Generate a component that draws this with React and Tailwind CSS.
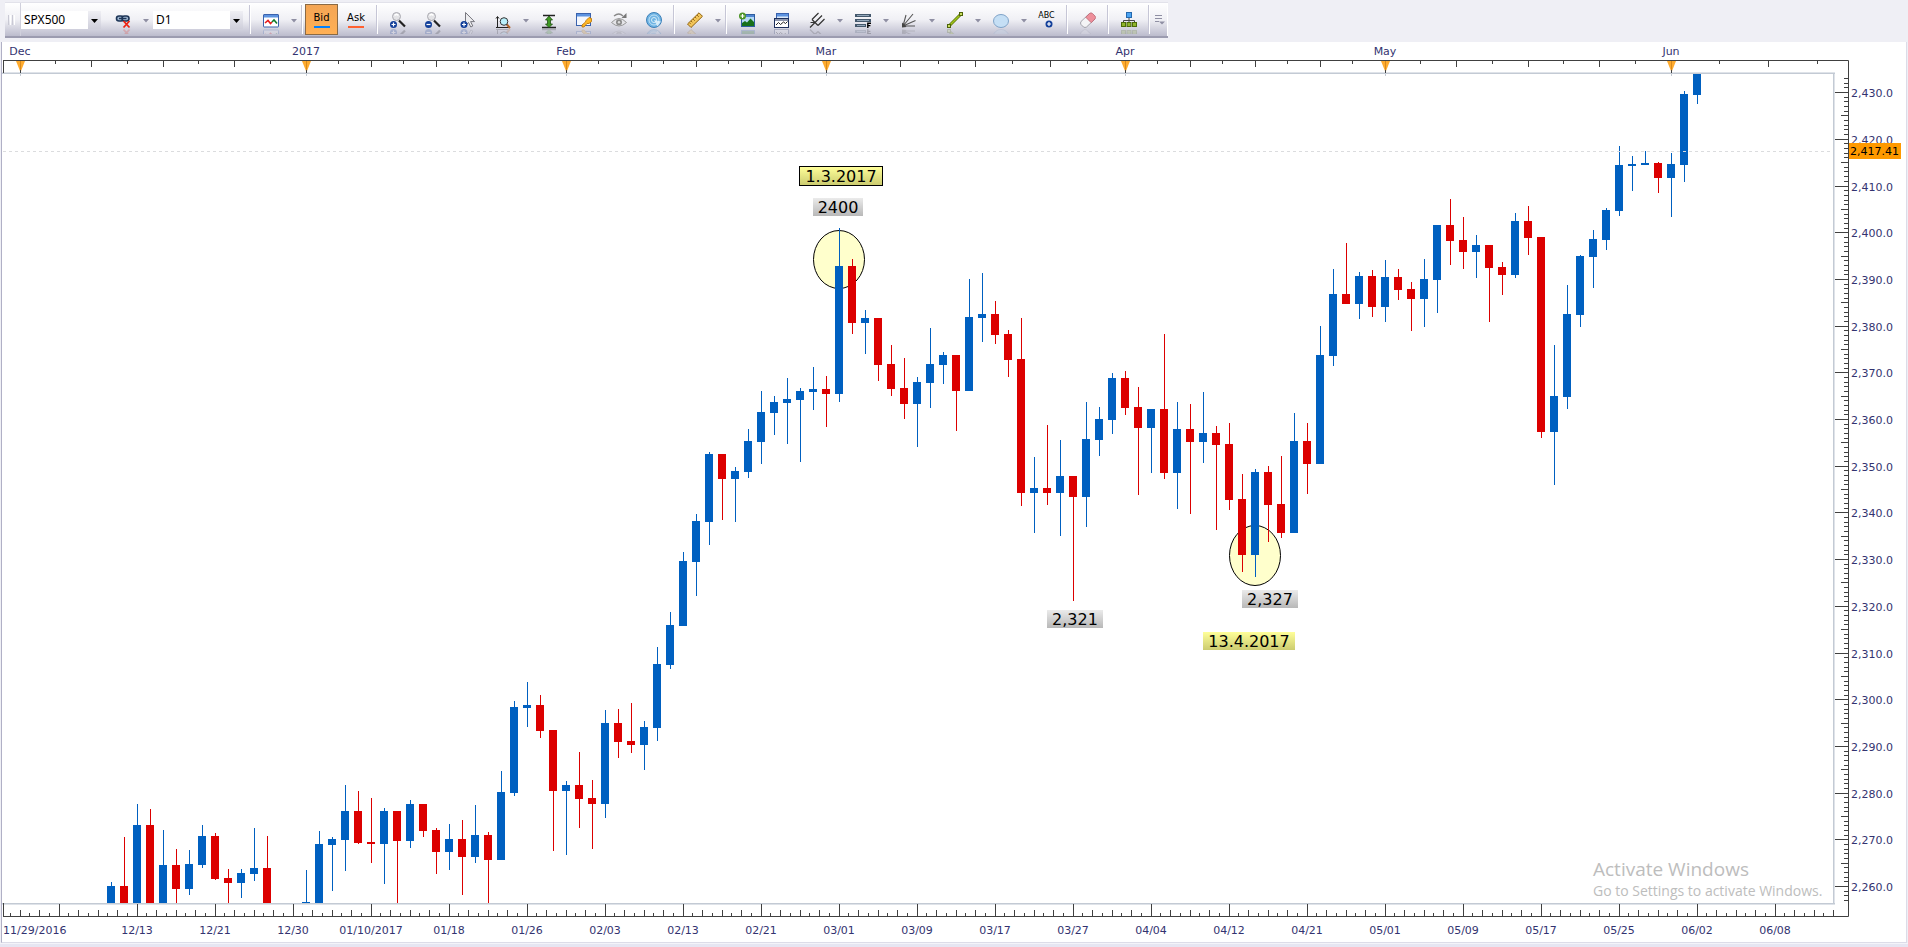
import React from "react";

const UP = "#0060c0";
const DOWN = "#dc0000";
const INK = "#404040";
const LABEL = "#333370";
const FRAME = "#c3cad4";
const FRAME_LIGHT = "#dfe3e9";

// slot, direction, body top, body bottom, wick top, wick bottom
const CANDLES = [
  [0, 1, 886, 903, 882, 903], [1, 0, 886, 903, 837, 903], [2, 1, 825, 903, 804, 903],
  [3, 0, 825, 903, 809, 903], [4, 1, 865, 903, 830, 903], [5, 0, 865, 889, 849, 903],
  [6, 1, 864, 889, 850, 895], [7, 1, 836, 865, 825, 868], [8, 0, 836, 879, 833, 880],
  [9, 0, 878, 883, 869, 903], [10, 1, 873, 883, 869, 898], [11, 1, 868, 874, 828, 881],
  [12, 0, 868, 903, 836, 903], [15, 1, 902, 903, 870, 903], [16, 1, 844, 903, 831, 903],
  [17, 1, 839, 845, 837, 891], [18, 1, 811, 840, 785, 871], [19, 0, 811, 843, 791, 844],
  [20, 0, 842, 844, 798, 863], [21, 1, 811, 844, 808, 884], [22, 0, 811, 841, 811, 903],
  [23, 1, 804, 841, 800, 848], [24, 0, 804, 831, 804, 837], [25, 0, 830, 852, 828, 874],
  [26, 1, 839, 852, 824, 870], [27, 0, 839, 857, 820, 895], [28, 1, 835, 857, 805, 863],
  [29, 0, 835, 860, 832, 903], [30, 1, 792, 860, 771, 860], [31, 1, 707, 793, 701, 796],
  [32, 1, 705, 708, 682, 727], [33, 0, 705, 731, 695, 738], [34, 0, 730, 791, 730, 851],
  [35, 1, 785, 791, 781, 855], [36, 0, 785, 799, 752, 828], [37, 0, 798, 804, 780, 849],
  [38, 1, 723, 804, 710, 818], [39, 0, 723, 742, 709, 758], [40, 0, 741, 745, 703, 753],
  [41, 1, 727, 745, 721, 770], [42, 1, 664, 728, 647, 741], [43, 1, 625, 665, 612, 669],
  [44, 1, 561, 626, 552, 626], [45, 1, 521, 562, 514, 596], [46, 1, 454, 522, 452, 545],
  [47, 0, 454, 479, 454, 520], [48, 1, 471, 479, 467, 522], [49, 1, 441, 472, 429, 478],
  [50, 1, 412, 442, 391, 464], [51, 1, 402, 413, 396, 435], [52, 1, 399, 403, 378, 444],
  [53, 1, 391, 400, 388, 462], [54, 1, 389, 392, 367, 410], [55, 0, 389, 394, 376, 427],
  [56, 1, 266, 394, 228, 402], [57, 0, 266, 323, 259, 334], [58, 1, 318, 323, 310, 354],
  [59, 0, 318, 365, 318, 381], [60, 0, 364, 389, 345, 396], [61, 0, 388, 404, 358, 419],
  [62, 1, 382, 404, 377, 447], [63, 1, 364, 383, 328, 408], [64, 1, 355, 365, 352, 384],
  [65, 0, 355, 391, 355, 431], [66, 1, 317, 391, 279, 391], [67, 1, 314, 318, 273, 342],
  [68, 0, 314, 335, 301, 344], [69, 0, 334, 360, 330, 377], [70, 0, 359, 493, 318, 506],
  [71, 1, 488, 493, 457, 533], [72, 0, 488, 493, 425, 505], [73, 1, 476, 493, 440, 536],
  [74, 0, 476, 497, 476, 601], [75, 1, 439, 497, 402, 527], [76, 1, 419, 440, 407, 456],
  [77, 1, 378, 420, 373, 434], [78, 0, 378, 408, 371, 415], [79, 0, 407, 428, 387, 495],
  [80, 1, 409, 428, 409, 473], [81, 0, 409, 473, 334, 479], [82, 1, 429, 473, 402, 509],
  [83, 0, 429, 442, 404, 514], [84, 1, 433, 442, 392, 463], [85, 0, 433, 445, 426, 530],
  [86, 0, 444, 500, 423, 510], [87, 0, 499, 555, 474, 572], [88, 1, 472, 555, 469, 577],
  [89, 0, 472, 505, 466, 542], [90, 0, 504, 533, 456, 538], [91, 1, 441, 533, 413, 533],
  [92, 0, 441, 464, 423, 494], [93, 1, 355, 464, 326, 464], [94, 1, 294, 356, 269, 366],
  [95, 0, 294, 304, 243, 304], [96, 1, 276, 304, 272, 319], [97, 0, 276, 307, 270, 317],
  [98, 1, 277, 307, 260, 322], [99, 0, 277, 290, 269, 300], [100, 0, 289, 299, 282, 331],
  [101, 1, 279, 299, 259, 327], [102, 1, 225, 280, 225, 313], [103, 0, 225, 241, 199, 265],
  [104, 0, 240, 252, 217, 269], [105, 1, 245, 252, 235, 278], [106, 0, 245, 268, 245, 322],
  [107, 0, 267, 275, 262, 295], [108, 1, 221, 275, 213, 278], [109, 0, 221, 238, 206, 255],
  [110, 0, 237, 432, 237, 438], [111, 1, 396, 432, 345, 485], [112, 1, 314, 397, 285, 409],
  [113, 1, 256, 315, 255, 327], [114, 1, 239, 257, 230, 288], [115, 1, 210, 240, 208, 250],
  [116, 1, 165, 211, 146, 216], [117, 1, 164, 166, 156, 191], [118, 1, 163, 165, 151, 165],
  [119, 0, 163, 178, 162, 193], [120, 1, 164, 178, 153, 217], [121, 1, 94, 165, 91, 182],
  [122, 1, 74, 95, 74, 104],
];

const MONTHS = [
  ["Dec", 20], ["2017", 306], ["Feb", 566], ["Mar", 826],
  ["Apr", 1125], ["May", 1385], ["Jun", 1671],
];
const NEXT_MONTH_X = 2061;

const DATES = [
  "12/13", "12/21", "12/30", "01/10/2017", "01/18", "01/26", "02/03", "02/13",
  "02/21", "03/01", "03/09", "03/17", "03/27", "04/04", "04/12", "04/21",
  "05/01", "05/09", "05/17", "05/25", "06/02", "06/08",
];

/* ---------- toolbar icons ---------- */

const ICONS = {
  link: (
    <>
      <rect x="1.5" y="4" width="7" height="5" rx="2.5" fill="#9db4cf" stroke="#1d3557" strokeWidth="1.6" />
      <rect x="7" y="4" width="7" height="5" rx="2.5" fill="#9db4cf" stroke="#1d3557" strokeWidth="1.6" />
      <path d="M4 6.500h7.500" stroke="#1d3557" strokeWidth="1.4" />
      <path d="M8.500 9l6 6.500M14.500 9l-6 6.500" stroke="#ee2211" strokeWidth="1.800" />
    </>
  ),
  chart: (
    <>
      <rect x="0.5" y="2.5" width="15" height="12.5" rx="0.5" fill="#fff" stroke="#3a62ad" />
      <rect x="1" y="3" width="14" height="2.5" fill="#5d93e0" />
      <path d="M2 11l3-2.5 2.5 3L9 10" fill="none" stroke="#e81b1b" strokeWidth="1.6" />
      <path d="M9 10l2-2 3 3.5" fill="none" stroke="#137a2a" strokeWidth="1.6" />
    </>
  ),
  zoomIn: (
    <>
      <path d="M9 8.5l6 6" stroke="#222" strokeWidth="2.2" />
      <circle cx="6.5" cy="4.5" r="4" fill="#e3e3e6" stroke="#a9a9b0" />
      <path d="M4.5 3.5q2-2 4 0" fill="none" stroke="#fff" strokeWidth="1.4" />
      <circle cx="3.5" cy="12.5" r="3.5" fill="#123f9a" />
      <path d="M1.5 12.5h4M3.5 10.5v4" stroke="#fff" strokeWidth="1.2" />
    </>
  ),
  zoomOut: (
    <>
      <path d="M9 8.5l6 6" stroke="#222" strokeWidth="2.2" />
      <circle cx="6.5" cy="4.5" r="4" fill="#e3e3e6" stroke="#a9a9b0" />
      <path d="M4.5 3.5q2-2 4 0" fill="none" stroke="#fff" strokeWidth="1.4" />
      <circle cx="3.5" cy="12.5" r="3.5" fill="#123f9a" />
      <path d="M1.5 12.5h4" stroke="#fff" strokeWidth="1.2" />
    </>
  ),
  cursor: (
    <>
      <path d="M5.5 0.5v13l3-3 2.3 4.5 2-1-2.2-4.4h3.9z" fill="#ededf0" stroke="#77777f" />
      <circle cx="4" cy="12.5" r="3.5" fill="#123f9a" />
      <path d="M2 12.5h4M4 10.5v4" stroke="#fff" strokeWidth="1.2" />
    </>
  ),
  axisZoom: (
    <>
      <path d="M2.5 5v10M1 6.5l1.5-2 1.5 2M1 15.5h14" fill="none" stroke="#222" />
      <path d="M11.5 12l3.5 4" stroke="#b0642a" strokeWidth="2" />
      <circle cx="9" cy="9.5" r="3.8" fill="#b9f0fb" stroke="#333" />
    </>
  ),
  expand: (
    <>
      <path d="M2 3.5h12M1 15.5h14" stroke="#222" strokeWidth="1.3" />
      <path d="M8 4l3.5 4H9.500v4h2L8 15.500 4.500 12h2V8h-2z" fill="#3f9a24" stroke="#1f4f12" strokeWidth="0.8" />
    </>
  ),
  windowKey: (
    <>
      <rect x="0.5" y="1.500" width="14" height="12" fill="#f4f7fd" stroke="#3a62ad" />
      <rect x="1" y="2" width="13" height="2.500" fill="#5d93e0" />
      <path d="M10 8.500l3-3 2.500 1v3l-2.500 2-2 0-3 3.500h-2v-2l3.500-3z" fill="#ffb726" stroke="#b56e00" strokeWidth="0.8" />
    </>
  ),
  eye: (
    <>
      <path d="M0.500 10.500q7.500-8 15 0q-7.500 7-15 0z" fill="#e4e4e8" stroke="#999" />
      <circle cx="8" cy="10.300" r="3" fill="#8a8a8a" />
      <circle cx="8" cy="10.300" r="1.200" fill="#ddd" />
      <path d="M3 4q5-4 9 0" fill="none" stroke="#888" strokeWidth="1.300" />
      <path d="M15.500 1v5h-5z" fill="#777" />
    </>
  ),
  globe: (
    <>
      <circle cx="8" cy="8" r="7.500" fill="#6fb4e4" stroke="#3d80b8" />
      <circle cx="8" cy="8" r="5" fill="none" stroke="#c2e2f6" />
      <circle cx="8" cy="8" r="2.500" fill="none" stroke="#d6edf9" />
      <path d="M8 8L15 9.500L11.500 14.500z" fill="#e8f5fd" opacity="0.800" />
    </>
  ),
  ruler: (
    <>
      <path d="M12 0.800l3.500 3.500L4 15.500 0.500 12z" fill="#f3c65a" stroke="#8f6210" />
      <path d="M10 3l1.800 1.800M8 5l1.300 1.300M6 7l1.800 1.800M4 9l1.300 1.300M2.500 10.800l1.300 1.300" stroke="#8f6210" strokeWidth="0.900" />
    </>
  ),
  image: (
    <>
      <rect x="2.500" y="2.500" width="13" height="12" fill="#b5d9f6" stroke="#2f5d9f" />
      <rect x="3" y="3" width="12" height="2" fill="#4f86d2" />
      <path d="M3 14v-3l3-2 2 1.500 3.500-4L15 10v4z" fill="#17701a" />
      <circle cx="3.500" cy="4" r="3.500" fill="#4c9426" />
      <path d="M1.500 4h4M3.500 2v4" stroke="#fff" strokeWidth="1.200" />
    </>
  ),
  windowChart: (
    <>
      <rect x="2.500" y="1.500" width="12" height="9" fill="#dceafb" stroke="#3a62ad" />
      <rect x="3" y="2" width="11" height="2.500" fill="#5d93e0" />
      <rect x="0.500" y="6.500" width="14" height="9" fill="#fff" stroke="#1c2f5c" />
      <path d="M1 8h13" stroke="#1c2f5c" />
      <path d="M2 13l2.500-2.500 2 2 3-2.500 2 1.500 2-2" fill="none" stroke="#222" />
    </>
  ),
  pitchfork: (
    <path d="M1 15.500L6 10.500M3 7.500l6 6M6 10.500L13 3.500M3 7.500L9.500 1M9 13.500L15.500 7M1.500 10.500h4.500" fill="none" stroke="#333" strokeWidth="1.200" />
  ),
  fibo: (
    <>
      <path d="M0 3.500h16M0 8.500h16M0 13.500h11" stroke="#44586c" strokeWidth="3" />
      <path d="M2 3.500h12M2 8.500h12M2 13.500h8" stroke="#93a7ba" strokeWidth="1" />
      <path d="M12.800 16v-4.800h3.200M12.800 13.600h2.600" fill="none" stroke="#000" strokeWidth="1.400" />
    </>
  ),
  fan: (
    <>
      <path d="M2 14L5 3M2 14L12 2M2 14L14.500 8.500M2 14h12" fill="none" stroke="#555" strokeWidth="1.100" />
      <path d="M1 15.500v-5l4.500 4.500z" fill="#444" />
    </>
  ),
  line: (
    <>
      <path d="M2 14L14 2" stroke="#5f7a08" strokeWidth="3" />
      <path d="M2 14L14 2" stroke="#9fc31c" strokeWidth="1.500" />
      <rect x="0.500" y="12.500" width="3" height="3" fill="#c8dd60" stroke="#4d6309" />
      <rect x="12.500" y="0.500" width="3" height="3" fill="#c8dd60" stroke="#4d6309" />
    </>
  ),
  ellipse: <ellipse cx="8" cy="9" rx="7.500" ry="6.500" fill="#c5dff5" stroke="#7fa3c8" />,
  eraser: (
    <>
      <path d="M9.500 1.500L1 9.500q-1 1.500 0 3l2.500 2.500q1.500 1 3 0L15 7z" fill="#f4f4f6" stroke="#8f8f98" strokeWidth="0.800" />
      <path d="M9.500 1.500q1.500-1.300 3 0L15 4q1.300 1.500 0 3l-3.800 3.700-5.500-5.500z" fill="#ee8f9b" stroke="#b86a76" strokeWidth="0.800" />
    </>
  ),
  tree: (
    <>
      <path d="M8 5v6M2.500 11V8.500h11V11" fill="none" stroke="#4a4a4a" />
      <rect x="5.500" y="0.500" width="5" height="5" fill="#4aa3f2" stroke="#2568ad" />
      <rect x="0.500" y="10.500" width="4" height="4" fill="#8fb52a" stroke="#4d6b09" />
      <rect x="6" y="10.500" width="4" height="4" fill="#8fb52a" stroke="#4d6b09" />
      <rect x="11.500" y="10.500" width="4" height="4" fill="#8fb52a" stroke="#4d6b09" />
    </>
  ),
  badge: (
    <>
      <circle cx="10" cy="4" r="3.500" fill="#123f9a" />
      <path d="M8 4h4M10 2v4" stroke="#fff" strokeWidth="1.200" />
    </>
  ),
};

function Icon({ name }) {
  return (
    <svg width="16" height="22" viewBox="0 0 16 22" className="shrink-0" aria-hidden="true">
      {ICONS[name]}
      <g transform="translate(0 33) scale(1 -1)" opacity="0.2">
        {ICONS[name]}
      </g>
    </svg>
  );
}

function Tool({ name, label, menu }) {
  return (
    <div className="flex h-full items-center">
      <button type="button" aria-label={label} className="flex h-full w-[35px] items-center justify-center pt-1.5">
        <Icon name={name} />
      </button>
      {menu && (
        <button type="button" aria-label={`${label} options`} className="flex h-full w-[11px] items-center justify-center pt-0.5">
          <svg width="6" height="4" viewBox="0 0 6 4" aria-hidden="true">
            <path d="M0 0h6L3 3.500z" fill="#8f8fa3" />
          </svg>
        </button>
      )}
    </div>
  );
}

function Separator() {
  return (
    <div className="flex h-full w-1.5 justify-center py-0.5">
      <div className="h-full w-px bg-[#c6c6d6]" />
      <div className="h-full w-px bg-white" />
    </div>
  );
}

function Combo({ label, value, options, className }) {
  return (
    <div className={`relative h-[18px] shrink-0 bg-white ${className}`}>
      <select
        aria-label={label}
        defaultValue={value}
        className="block h-full w-full appearance-none bg-transparent pl-[3px] font-['Noto_Sans',sans-serif] text-[12px] leading-4 text-black outline-none"
      >
        {options.map((o) => (
          <option key={o}>{o}</option>
        ))}
      </select>
      <span className="pointer-events-none absolute inset-y-0 right-0 flex w-[13px] items-center justify-center bg-linear-to-b from-[#efeff4] to-[#cfcfdb] pt-0.5">
        <svg width="7" height="4" viewBox="0 0 7 4" aria-hidden="true">
          <path d="M0 0h7L3.500 4z" fill="#000" />
        </svg>
      </span>
    </div>
  );
}

function Toolbar() {
  return (
    <header className="h-[42px] shrink-0 pt-0.5 pl-[5px]">
      <div className="flex h-9 w-fit items-center border-t border-b-2 border-t-[#e2e2ea] border-b-[#9c9cb0] bg-linear-to-b from-white via-[#f0f0f5] to-[#bcbccd]">
        <div className="flex h-full w-4 items-center gap-px border-r border-[#d0d0dc] pl-[3px]">
          <div className="h-2.5 w-px bg-[#c9c9d4]" />
          <div className="h-2.5 w-px bg-white" />
          <div className="h-2.5 w-px bg-[#c9c9d4]" />
          <div className="h-2.5 w-px bg-white" />
        </div>
        <Combo label="Instrument" value="SPX500" options={["SPX500", "NAS100", "US30"]} className="w-20" />
        <div className="h-full pl-1">
          <Tool name="link" label="Link charts" menu />
        </div>
        <Combo label="Period" value="D1" options={["D1", "W1", "H4", "H1"]} className="mr-1 ml-0.5 w-[90px]" />
        <Separator />
        <Tool name="chart" label="Chart type" menu />
        <Separator />
        <button
          type="button"
          aria-pressed="true"
          className="flex h-[31px] w-[33px] flex-col items-center justify-center gap-0.5 border border-[#8a6a45] bg-linear-to-b from-[#f3a555] to-[#ffb055] font-['DejaVu_Sans',sans-serif] text-[10px] leading-3 text-black"
        >
          Bid
          <span className="h-0.5 w-4 bg-[#0080ff]" />
        </button>
        <button
          type="button"
          aria-pressed="false"
          className="flex h-[31px] w-9 flex-col items-center justify-center gap-0.5 font-['DejaVu_Sans',sans-serif] text-[10px] leading-3 text-black"
        >
          Ask
          <span className="h-0.5 w-4 bg-[#ff6030]" />
        </button>
        <Separator />
        <Tool name="zoomIn" label="Zoom in" />
        <Tool name="zoomOut" label="Zoom out" />
        <Tool name="cursor" label="Cursor" />
        <Tool name="axisZoom" label="Axis zoom" menu />
        <Tool name="expand" label="Fit height" />
        <Tool name="windowKey" label="Chart properties" />
        <Tool name="eye" label="Show or hide" />
        <Tool name="globe" label="Time zone" />
        <Separator />
        <Tool name="ruler" label="Measure" menu />
        <Separator />
        <Tool name="image" label="Add chart" />
        <Tool name="windowChart" label="Add indicator" />
        <Tool name="pitchfork" label="Pitchfork" menu />
        <Tool name="fibo" label="Fibonacci" menu />
        <Tool name="fan" label="Fan" menu />
        <Tool name="line" label="Line" menu />
        <Tool name="ellipse" label="Shape" menu />
        <button
          type="button"
          className="flex h-full w-[35px] flex-col items-center justify-center pt-1 font-['DejaVu_Sans',sans-serif] text-[8px] leading-[9px] text-black"
        >
          ABC
          <svg width="16" height="12" viewBox="0 0 16 12" aria-hidden="true">
            {ICONS.badge}
          </svg>
        </button>
        <Separator />
        <Tool name="eraser" label="Eraser" />
        <Separator />
        <Tool name="tree" label="Object tree" />
        <Separator />
        <button type="button" aria-label="More tools" className="flex h-full w-4 items-center justify-center border-r border-white">
          <svg width="10" height="10" viewBox="0 0 10 10" aria-hidden="true">
            <path d="M0 0.500h7M0 3.500h7M0 6.500h4" stroke="#8f8fa3" />
            <path d="M4 6.500h6L7 9.500z" fill="#8f8fa3" />
          </svg>
        </button>
      </div>
    </header>
  );
}

/* ---------- chart ---------- */

function MonthAxis() {
  const ticks = [];
  MONTHS.forEach(([, x], m) => {
    const next = m + 1 < MONTHS.length ? MONTHS[m + 1][1] : NEXT_MONTH_X;
    for (let k = 1; k < 8; k++) {
      ticks.push([Math.floor(x + ((next - x) * k) / 8), k % 2 ? 3 : 6]);
    }
  });
  return (
    <svg className="block h-full w-full" aria-label="Months">
      <rect x="0" y="30" width="100%" height="1" fill={FRAME_LIGHT} />
      <rect x="0" y="31" width="100%" height="1" fill={FRAME} />
      <rect x="1" y="18" width="100%" height="1" fill={INK} />
      <rect x="1" y="18" width="1" height="13" fill={INK} />
      <g transform="translate(-2 0)">
        {ticks.map(([x, h]) => (
          <rect key={x} x={x} y="19" width="1" height={h} fill={INK} />
        ))}
        {MONTHS.map(([name, x]) => (
          <g key={name}>
            <path d={`M${x - 4} 19h9l-4 10h-1z`} fill="#ffab2e" />
            <rect x={x} y="19" width="1" height="9" fill="#d98a1c" />
            <rect x={x} y="28" width="1" height="3" fill={INK} />
            <text x={x} y="13" textAnchor="middle" fontSize="11" fill={LABEL}>
              {name}
            </text>
          </g>
        ))}
      </g>
    </svg>
  );
}

function Plot() {
  return (
    <svg className="block h-full w-full" role="img" aria-label="SPX500 daily candles">
      <g transform="translate(-2 -74)">
        {MONTHS.map(([name, x]) => (
          <rect key={name} x={x} y="74" width="1" height="2" fill={FRAME} />
        ))}
        <g fill="#ffffcc" stroke="#000">
          <ellipse cx="839" cy="259.5" rx="25.5" ry="29" />
          <ellipse cx="1255" cy="555.5" rx="25.5" ry="30" />
        </g>
        {CANDLES.map(([slot, up, top, bottom, high, low]) => {
          const x = 107 + slot * 13;
          return (
            <g key={slot} fill={up ? UP : DOWN}>
              <rect x={x + 4} y={high} width="1" height={low - high} />
              <rect x={x} y={top} width="8" height={bottom - top} />
            </g>
          );
        })}
      </g>
      <line x1="1" x2="100%" y1="77.5" y2="77.5" stroke="#dbdcde" strokeDasharray="3 3" />
    </svg>
  );
}

function priceY(price) {
  return Math.round(18.1 + (2430 - price) * 4.67);
}

function PriceAxis() {
  const ticks = [];
  for (let p = 2434; p >= 2257; p--) ticks.push(p);
  return (
    <svg className="block h-full w-full" aria-label="Prices">
      <rect x="13" y="0" width="1" height="100%" fill={INK} />
      {ticks.map((p) => {
        const w = p % 10 === 0 ? 14 : p % 5 === 0 ? 7 : 4;
        return <rect key={p} x={13 - w} y={priceY(p)} width={w} height="1" fill={INK} />;
      })}
      {ticks
        .filter((p) => p % 10 === 0)
        .map((p) => (
          <text key={p} x="16" y={priceY(p) + 5} fontSize="11" fill={LABEL}>
            {`2,${p - 2000}.0`}
          </text>
        ))}
      <rect x="14" y="69" width="52" height="16" fill="#ff9900" />
      <text x="15" y="81" fontSize="11" fill="#000">
        2,417.41
      </text>
    </svg>
  );
}

function DateAxis() {
  const ticks = [];
  for (let k = -5; k < 184; k++) {
    const x = Math.floor(59 + k * 9.75);
    const kind = ((k % 8) + 8) % 8;
    ticks.push([x, kind === 0 ? 12 : kind % 2 ? 3 : 6]);
  }
  return (
    <svg className="block h-full w-full" aria-label="Dates">
      <rect x="0" y="0" width="100%" height="1" fill={FRAME} />
      <rect x="0" y="1" width="100%" height="1" fill={FRAME_LIGHT} />
      <rect x="1" y="13" width="100%" height="1" fill={INK} />
      <rect x="1" y="0" width="1" height="13" fill={INK} />
      <g transform="translate(-2 0)">
        {ticks.map(([x, h]) => (
          <rect key={x} x={x} y={13 - h} width="1" height={h} fill={INK} />
        ))}
        <g fontSize="11" fill={LABEL}>
          <text x="3" y="31">11/29/2016</text>
          {DATES.map((d, i) => (
            <text key={d} x={137 + i * 78} y="31" textAnchor="middle">
              {d}
            </text>
          ))}
        </g>
      </g>
    </svg>
  );
}

function Note({ children, className }) {
  return (
    <div className={`absolute flex items-center justify-center pt-px text-base leading-4 text-black ${className}`}>
      {children}
    </div>
  );
}

export default function App() {
  return (
    <div className="flex min-h-screen flex-col bg-[#efeff5]">
      <Toolbar />
      <main className="mr-px ml-px grid flex-1 grid-cols-[1fr_71px] grid-rows-[32px_minmax(829px,1fr)_39px] border-r border-b border-l border-r-[#dcdce8] border-b-[#dcdce8] border-l-[#b0b0c6] bg-white font-['DejaVu_Sans',Verdana,sans-serif]">
        <MonthAxis />
        <svg className="block h-full w-full" aria-hidden="true">
          <path d="M0 18.5h13.5V32" fill="none" stroke={INK} />
        </svg>
        <div className="relative overflow-hidden border-r border-[#dfe3e9]">
          <div className="h-full border-r border-[#c3cad4]">
            <Plot />
          </div>
          <Note className="top-[92px] left-[797px] h-5 w-[84px] border border-black bg-linear-to-b from-[#ffff99] to-[#cccc70]">1.3.2017</Note>
          <Note className="top-[124px] left-[811px] h-[18px] w-[50px] bg-linear-to-b from-[#ebebeb] to-[#b8b8b8]">2400</Note>
          <Note className="top-[536px] left-[1045px] h-[18px] w-14 bg-linear-to-b from-[#ebebeb] to-[#b8b8b8]">2,321</Note>
          <Note className="top-[516px] left-[1240px] h-[18px] w-14 bg-linear-to-b from-[#ebebeb] to-[#b8b8b8]">2,327</Note>
          <Note className="top-[558px] left-[1201px] h-[18px] w-[92px] bg-linear-to-b from-[#ffff99] to-[#cccc70]">13.4.2017</Note>
          <div className="absolute right-0 bottom-0.5 w-[241px] font-['Open_Sans',sans-serif] whitespace-nowrap text-[#bdbdbd]">
            <p className="text-[19px] leading-6">Activate Windows</p>
            <p className="text-[14px] leading-5">Go to Settings to activate Windows.</p>
          </div>
        </div>
        <PriceAxis />
        <DateAxis />
        <svg className="block h-full w-full" aria-hidden="true">
          <path d="M0 13.5h13.5V0" fill="none" stroke={INK} />
        </svg>
      </main>
      <footer className="h-1 shrink-0 border-t border-[#f4f4f9] bg-[#e6e6f2]" />
    </div>
  );
}
